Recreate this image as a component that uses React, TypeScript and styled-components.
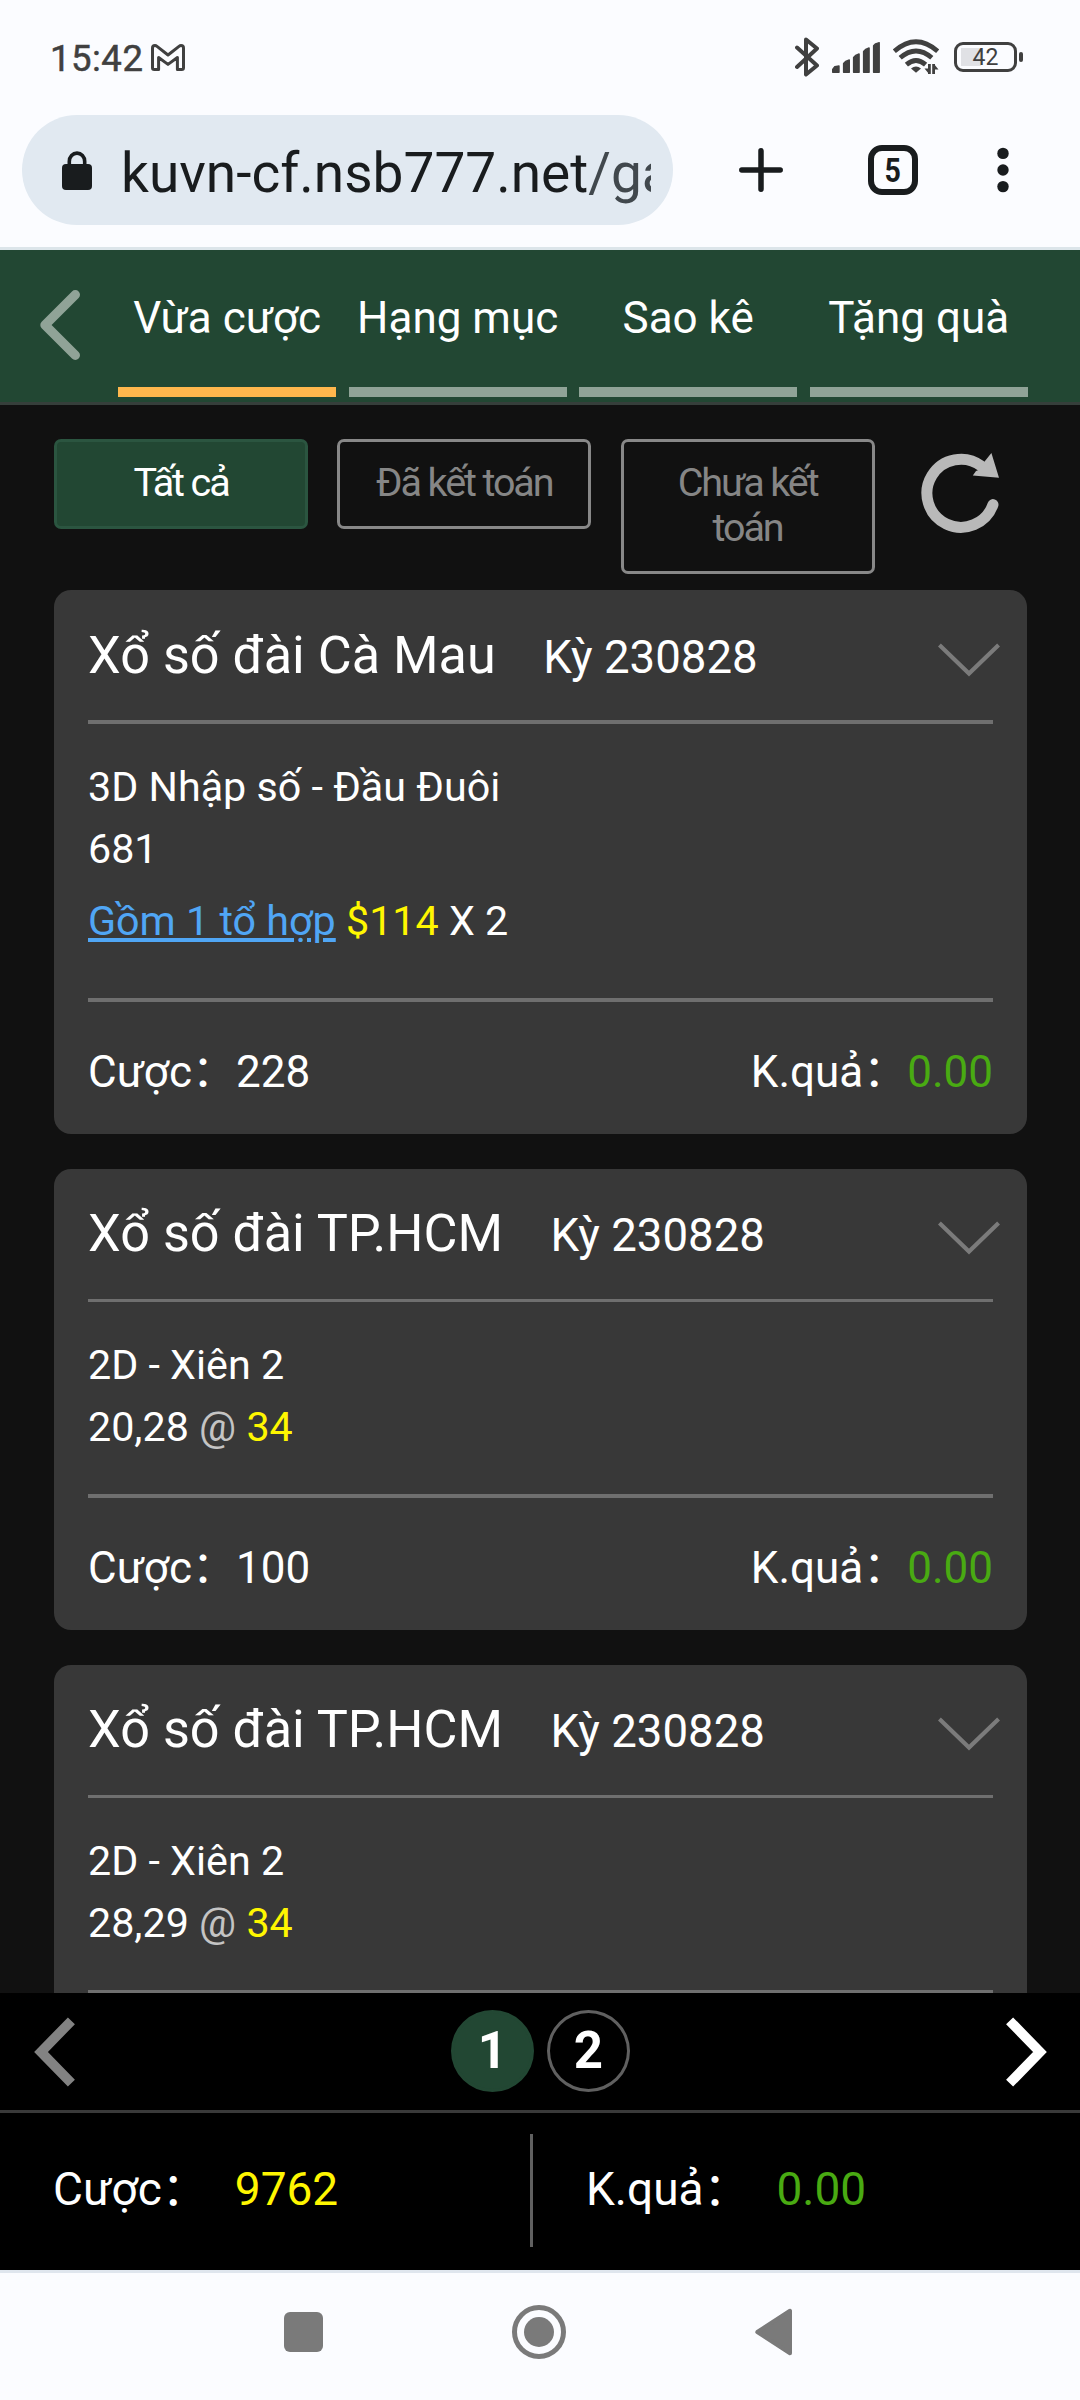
import React from "react";
import styled, { createGlobalStyle } from "styled-components";

const Global = createGlobalStyle`
  *, *::before, *::after { box-sizing: border-box; }
  body { margin: 0; background: #111; }
  svg { display: block; flex: none; }
`;

const Screen = styled.div`
  width: 1080px;
  height: 2400px;
  display: flex;
  flex-direction: column;
  overflow: hidden;
  background: #111111;
  color: #fff;
  font-family: Roboto, "Noto Sans CJK SC", sans-serif;
  white-space: nowrap;
`;

/* ---------- system status bar ---------- */

const StatusBar = styled.header`
  height: 115px;
  flex: none;
  display: flex;
  align-items: flex-start;
  justify-content: space-between;
  padding: 36px 57px 0 50px;
  background: #fbfcff;
  color: #404040;
`;

const StatusGroup = styled.div`
  display: flex;
  align-items: center;
  height: 42px;
`;

const Clock = styled.span`
  font-size: 36.5px;
  line-height: 42px;
  padding-top: 4px;
  margin-right: 8px;
  letter-spacing: 0.5px;
  -webkit-text-stroke: 0.5px #404040;
`;

const StatusIcons = styled(StatusGroup)`
  gap: 13px;
`;

const BatteryWrap = styled.div`
  display: flex;
  align-items: center;
  margin-left: 2px;
`;

const Battery = styled.div`
  width: 63px;
  height: 30px;
  border: 3px solid #404040;
  border-radius: 9px;
  font-size: 23px;
  line-height: 26px;
  text-align: center;
  background: linear-gradient(#e0e1e5, #e0e1e5) 4px 3px / 20px 18px no-repeat;
`;

const BatteryNub = styled.div`
  width: 4px;
  height: 10px;
  margin-left: 2px;
  border-radius: 2px;
  background: #404040;
`;

/* ---------- browser toolbar ---------- */

const Toolbar = styled.div`
  height: 135px;
  flex: none;
  display: flex;
  align-items: flex-start;
  padding-left: 22px;
  background: #fbfcff;
  border-bottom: 3px solid #dce5ea;
  color: #191c1e;
`;

const UrlPill = styled.div`
  width: 651px;
  height: 110px;
  flex: none;
  display: flex;
  align-items: center;
  padding: 0 22px 0 40px;
  border-radius: 55px;
  background: #e1e9f1;
`;

const UrlText = styled.div`
  flex: 1;
  margin-left: 29px;
  padding-top: 5px;
  overflow: hidden;
  font-size: 55px;
  line-height: 72px;
`;

const UrlPath = styled.span`
  color: #41484d;
`;

const ToolbarActions = styled.div`
  display: flex;
  align-items: center;
  height: 110px;
  margin-left: 66px;
`;

const TabCount = styled.div`
  width: 50px;
  height: 50px;
  margin: 0 79px 0 85px;
  border: 6px solid #191c1e;
  border-radius: 14px;
  display: flex;
  align-items: center;
  justify-content: center;
`;

const TabDigit = styled.span`
  font-size: 34px;
  line-height: 38px;
  font-weight: 700;
  transform: scaleX(0.84);
`;

/* ---------- page header ---------- */

const PageHeader = styled.nav`
  height: 155px;
  flex: none;
  display: flex;
  padding: 0 52.2px 0 40px;
  background: #224733;
  border-bottom: 3px solid #363f3b;
`;

const BackSlot = styled.div`
  width: 78px;
  flex: none;
  padding-top: 40px;
`;

const Tabs = styled.div`
  flex: 1;
  display: grid;
  grid-template-columns: repeat(4, 1fr);
  column-gap: 12.2px;
`;

const Tab = styled.div<{ $active?: boolean }>`
  height: 147px;
  padding-top: 42px;
  border-bottom: 10px solid ${(p) => (p.$active ? "#ffb74d" : "#90a397")};
  font-size: 44px;
  line-height: 52px;
  text-align: center;
`;

/* ---------- filters ---------- */

const Filters = styled.div`
  height: 185px;
  flex: none;
  display: flex;
  align-items: flex-start;
  gap: 29.3px;
  padding: 34px 0 0 54px;
`;

const FilterButton = styled.button<{ $active?: boolean }>`
  width: 254px;
  padding: 18px 30px 21px;
  border: 3px solid ${(p) => (p.$active ? "#2b5540" : "#888888")};
  border-radius: 7px;
  background: ${(p) => (p.$active ? "#224733" : "transparent")};
  color: ${(p) => (p.$active ? "#ffffff" : "#868686")};
  font: 400 39.5px/45px Roboto, sans-serif;
  letter-spacing: -2.1px;
  white-space: normal;
`;

const RefreshSlot = styled.div`
  padding: 13px 0 0 17px;
`;

/* ---------- tickets ---------- */

const TicketList = styled.main`
  height: 1403px;
  flex: none;
  display: flex;
  flex-direction: column;
  gap: 34.7px;
  padding: 0 53px 0 54px;
  overflow: hidden;
`;

const Card = styled.article`
  flex: none;
  padding: 0 34px;
  border-radius: 17px;
  background: #383838;
`;

const CardHead = styled.div`
  height: 130px;
  padding-top: 3px;
  display: flex;
  align-items: center;
`;

const Heading = styled.div`
  flex: 1;
  display: flex;
  align-items: baseline;
  gap: 47.5px;
  line-height: 62px;
`;

const Station = styled.span`
  font-size: 52.2px;
`;

const Draw = styled.span`
  font-size: 45.6px;
`;

const ChevronSlot = styled.div`
  margin: 6px -7px 0 0;
`;

const Divider = styled.div`
  height: 3.7px;
  background: #6f6f6f;
`;

const CardBody = styled.div<{ $height: number }>`
  height: ${(p) => p.$height}px;
  padding-top: 32px;
  font-size: 41.25px;
  line-height: 62px;
`;

const ComboLine = styled.div`
  margin-top: 10px;
`;

const ComboLink = styled.a`
  color: #50a6f5;
  text-decoration: underline;
  text-decoration-thickness: 4px;
  text-underline-offset: 3px;
`;

const Money = styled.span`
  color: #fff600;
`;

const At = styled.span`
  color: #c4c4c4;
`;

const Result = styled.span`
  color: #49aa12;
`;

const CardFoot = styled.div`
  height: 132.3px;
  padding-top: 8px;
  display: flex;
  align-items: center;
  justify-content: space-between;
  font-size: 44px;
  line-height: 52px;
`;

/* ---------- pager and totals ---------- */

const Pager = styled.div`
  height: 120px;
  flex: none;
  display: flex;
  justify-content: space-between;
  padding: 17px 33px 0 34px;
  background: #000;
  border-bottom: 3px solid #3a3a3a;
`;

const ArrowSlot = styled.div`
  padding-top: 7px;
`;

const Pages = styled.div`
  display: flex;
  gap: 13px;
`;

const Page = styled.div<{ $active?: boolean }>`
  width: 83px;
  height: 82px;
  border-radius: 50%;
  border: 3px solid ${(p) => (p.$active ? "#224733" : "#606060")};
  background: ${(p) => (p.$active ? "#224733" : "#000")};
  font-size: 51px;
  font-weight: 700;
  line-height: 76px;
  text-align: center;
`;

const Totals = styled.div`
  height: 157px;
  flex: none;
  display: flex;
  padding-top: 21px;
  background: #000;
  font-size: 46px;
  line-height: 110px;
`;

const Total = styled.div<{ $width?: number }>`
  width: ${(p) => (p.$width ? `${p.$width}px` : "auto")};
  display: flex;
  gap: 27px;
  padding-left: 53px;
`;

const TotalRule = styled.div`
  width: 3px;
  height: 113px;
  background: #606060;
`;

/* ---------- system navigation ---------- */

const SystemNav = styled.footer`
  flex: 1;
  display: flex;
  align-items: flex-start;
  padding: 32px 0 0 284px;
  background: #fbfcff;
  border-top: 3px solid #dfe6ee;
`;

const RecentsSquare = styled.div`
  width: 39px;
  height: 40px;
  margin: 7px 189px 0 0;
  border-radius: 6px;
  background: #7a7a7a;
`;

const HomeRing = styled.div`
  width: 54px;
  height: 54px;
  margin-right: 189px;
  padding: 7px;
  border: 5px solid #7a7a7a;
  border-radius: 50%;
`;

const HomeDot = styled.div`
  width: 30px;
  height: 30px;
  border-radius: 50%;
  background: #7a7a7a;
`;

const BackTriangle = styled.div`
  padding-top: 3px;
`;

/* ---------- icons ---------- */

const GmailIcon = () => (
  <svg width="34" height="27" viewBox="0 0 34 27" fill="none" stroke="#404040" strokeWidth="3" strokeLinejoin="round">
    <path d="M3.3 25.5H7.6V13.5L17 20.4L26.4 13.5V25.5H30.7Q32.5 25.5 32.5 23.7V4Q32.5 1.6 30 1.6Q29 1.6 28 2.4L17 11L6 2.4Q5 1.6 4 1.6Q1.5 1.6 1.5 4V23.7Q1.5 25.5 3.3 25.5Z" />
  </svg>
);

const BluetoothIcon = () => (
  <svg width="24" height="40" viewBox="0 0 24 40" fill="none" stroke="#404040" strokeWidth="4" strokeLinecap="round" strokeLinejoin="round">
    <path d="M2 10.5L22 28.5L11 37.5V2.5L22 11.5L2 30" />
  </svg>
);

const SignalIcon = () => (
  <svg width="48" height="31" viewBox="0 0 48 31" fill="#404040" stroke="#404040" strokeWidth="1.4" strokeLinejoin="round">
    <path d="M.7 27.5L2.8 24.6L7 24V30.3H.7Z" />
    <path d="M11.6 21.5L13.6 19.4L17.3 18V30.3H11.6Z" />
    <path d="M21.6 15.5L23.6 13.4L27.1 12V30.3H21.6Z" />
    <path d="M31.6 9.5L33.6 7.4L37.1 6V30.3H31.6Z" />
    <path d="M41.6 3.8L43.6 1.8L47.2 .7V30.3H41.6Z" />
  </svg>
);

const WifiIcon = () => (
  <svg width="46" height="36" viewBox="0 0 46 36" fill="none" stroke="#404040" strokeWidth="4.8">
    <path d="M1.3 12.2Q23 -6.8 44.7 12.2" />
    <path d="M7.2 18.8Q23 5.2 38.8 18.8" />
    <path d="M13.4 25.6Q23 17.2 32.6 25.6" />
    <path d="M23 33.8L18 29.6Q23 25.4 28 29.6Z" fill="#404040" stroke="none" />
    <path d="M36.4 25V35M40.6 35V25" strokeWidth="2.8" />
    <path d="M31.5 29.5L36 35V29.5ZM45.5 30.5L41 25V30.5Z" fill="#404040" stroke="none" />
  </svg>
);

const LockIcon = () => (
  <svg width="30" height="39" viewBox="0 0 30 39" fill="none">
    <path d="M7.3 16V10.5A7.7 8.4 0 0 1 22.7 10.5V16" stroke="#191c1e" strokeWidth="3.6" />
    <rect y="13" width="30" height="26" rx="4" fill="#191c1e" />
  </svg>
);

const PlusIcon = () => (
  <svg width="44" height="44" viewBox="0 0 44 44" stroke="#191c1e" strokeWidth="5.5" strokeLinecap="round">
    <path d="M22 2.8V41.2M2.8 22H41.2" />
  </svg>
);

const DotsIcon = () => (
  <svg width="12" height="46" viewBox="0 0 12 46" fill="#191c1e">
    <circle cx="6" cy="6.4" r="5.7" />
    <circle cx="6" cy="23" r="5.7" />
    <circle cx="6" cy="39.6" r="5.7" />
  </svg>
);

const BackIcon = () => (
  <svg width="40" height="70" viewBox="0 0 40 70" fill="none" stroke="#90a397" strokeWidth="9.4" strokeLinecap="round" strokeLinejoin="round">
    <path d="M35.3 4.7L5 35L35.3 65.3" />
  </svg>
);

const RefreshIcon = () => (
  <svg width="79" height="82" viewBox="0 0 79 82" fill="none">
    <path d="M72 52.6A34 34 0 1 1 60.5 14.2" stroke="#b9b9b9" strokeWidth="11" strokeLinecap="round" />
    <path d="M70.4 1L78 25.8L51.8 23.6L55 19L60 17L64 9Z" fill="#b9b9b9" />
  </svg>
);

const ChevronDown = () => (
  <svg width="62" height="34" viewBox="0 0 62 34" fill="none" stroke="#7b7b7b" strokeWidth="4.2">
    <path d="M1.4 2L31 30.6L60.6 2" />
  </svg>
);

const PagerArrow = ({ next }: { next?: boolean }) => (
  <svg width="41" height="70" viewBox="0 0 41 70" fill="none" stroke={next ? "#ffffff" : "#828282"} strokeWidth="9.8">
    <path d={next ? "M3.6 3.8L34 35L3.6 66.2" : "M37.4 3.8L7 35L37.4 66.2"} />
  </svg>
);

const TriangleIcon = () => (
  <svg width="37" height="48" viewBox="0 0 37 48" fill="#7a7a7a" stroke="#7a7a7a" strokeWidth="4" strokeLinejoin="round">
    <path d="M2.3 24L35 2.8V45.2Z" />
  </svg>
);

/* ---------- data ---------- */

type Ticket = {
  station: string;
  draw: string;
  play: string;
  numbers: string;
  odds?: string;
  combo?: { label: string; stake: string; factor: string };
  bet?: string;
  result?: string;
};

const tickets: Ticket[] = [
  {
    station: "Xổ số đài Cà Mau",
    draw: "230828",
    play: "3D Nhập số - Đầu Đuôi",
    numbers: "681",
    combo: { label: "Gồm 1 tổ hợp", stake: "$114", factor: "X 2" },
    bet: "228",
    result: "0.00",
  },
  { station: "Xổ số đài TP.HCM", draw: "230828", play: "2D - Xiên 2", numbers: "20,28", odds: "34", bet: "100", result: "0.00" },
  { station: "Xổ số đài TP.HCM", draw: "230828", play: "2D - Xiên 2", numbers: "28,29", odds: "34" },
];

const TicketCard = ({ t }: { t: Ticket }) => (
  <Card>
    <CardHead>
      <Heading>
        <Station>{t.station}</Station>
        <Draw>Kỳ {t.draw}</Draw>
      </Heading>
      <ChevronSlot>
        <ChevronDown />
      </ChevronSlot>
    </CardHead>
    <Divider />
    <CardBody $height={t.combo ? 274.2 : 191.85}>
      <div>{t.play}</div>
      <div>
        {t.numbers}
        {t.odds && (
          <>
            {" "}
            <At>@</At> <Money>{t.odds}</Money>
          </>
        )}
      </div>
      {t.combo && (
        <ComboLine>
          <ComboLink>{t.combo.label}</ComboLink> <Money>{t.combo.stake}</Money> {t.combo.factor}
        </ComboLine>
      )}
    </CardBody>
    <Divider />
    <CardFoot>
      {t.bet && <span>Cược：{t.bet}</span>}
      {t.result && (
        <span>
          K.quả：<Result>{t.result}</Result>
        </span>
      )}
    </CardFoot>
  </Card>
);

export default function App() {
  return (
    <Screen>
      <Global />
      <StatusBar>
        <StatusGroup>
          <Clock>15:42</Clock>
          <GmailIcon />
        </StatusGroup>
        <StatusIcons>
          <BluetoothIcon />
          <SignalIcon />
          <WifiIcon />
          <BatteryWrap>
            <Battery>42</Battery>
            <BatteryNub />
          </BatteryWrap>
        </StatusIcons>
      </StatusBar>
      <Toolbar>
        <UrlPill>
          <LockIcon />
          <UrlText>
            kuvn-cf.nsb777.net<UrlPath>/ga</UrlPath>
          </UrlText>
        </UrlPill>
        <ToolbarActions>
          <PlusIcon />
          <TabCount>
            <TabDigit>5</TabDigit>
          </TabCount>
          <DotsIcon />
        </ToolbarActions>
      </Toolbar>
      <PageHeader>
        <BackSlot>
          <BackIcon />
        </BackSlot>
        <Tabs>
          <Tab $active>Vừa cược</Tab>
          <Tab>Hạng mục</Tab>
          <Tab>Sao kê</Tab>
          <Tab>Tặng quà</Tab>
        </Tabs>
      </PageHeader>
      <Filters>
        <FilterButton $active>Tất cả</FilterButton>
        <FilterButton>Đã kết toán</FilterButton>
        <FilterButton>Chưa kết toán</FilterButton>
        <RefreshSlot>
          <RefreshIcon />
        </RefreshSlot>
      </Filters>
      <TicketList>
        {tickets.map((t, i) => (
          <TicketCard key={i} t={t} />
        ))}
      </TicketList>
      <Pager>
        <ArrowSlot>
          <PagerArrow />
        </ArrowSlot>
        <Pages>
          <Page $active>1</Page>
          <Page>2</Page>
        </Pages>
        <ArrowSlot>
          <PagerArrow next />
        </ArrowSlot>
      </Pager>
      <Totals>
        <Total $width={530}>
          <span>Cược：</span>
          <Money>9762</Money>
        </Total>
        <TotalRule />
        <Total>
          <span>K.quả：</span>
          <Result>0.00</Result>
        </Total>
      </Totals>
      <SystemNav>
        <RecentsSquare />
        <HomeRing>
          <HomeDot />
        </HomeRing>
        <BackTriangle>
          <TriangleIcon />
        </BackTriangle>
      </SystemNav>
    </Screen>
  );
}
